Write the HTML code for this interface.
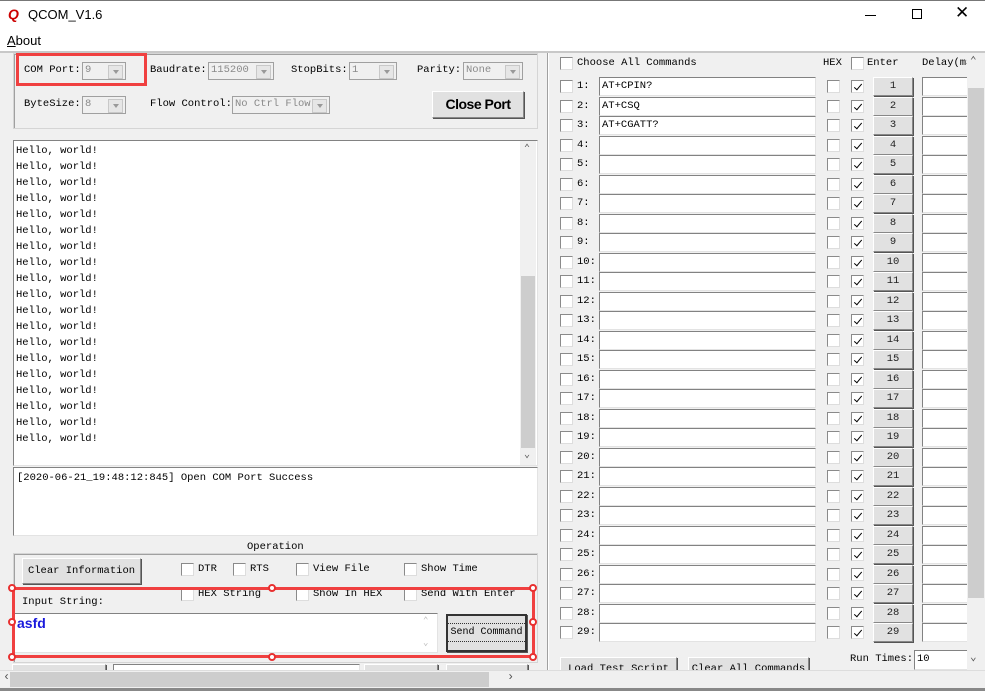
<!DOCTYPE html>
<html><head><meta charset="utf-8"><style>
*{margin:0;padding:0;box-sizing:border-box}
body{width:985px;height:691px;overflow:hidden;background:#f0f0f0;position:relative;font-family:"Liberation Mono","DejaVu Sans Mono",monospace;font-size:10.5px;color:#000}
.a{position:absolute}
.sans{font-family:"Liberation Sans",sans-serif}
.cb{position:absolute;width:13px;height:13px;background:#fff;border:1px solid #8a8a8a;border-right-color:#ddd;border-bottom-color:#ddd}
.cb.k::after{content:"";position:absolute;left:4px;top:1px;width:3px;height:7px;border:solid #000;border-width:0 1.5px 1.5px 0;transform:rotate(40deg)}
.in{position:absolute;background:#fff;border:1px solid #828282;border-right-color:#e3e3e3;border-bottom-color:#e3e3e3}
.btn{position:absolute;background:#e1e1e1;border:1px solid #fff;border-right-color:#888;border-bottom-color:#888;box-shadow:1px 1px 0 #555;text-align:center;font-weight:normal}
.r{position:absolute;left:0;height:18px;width:985px}
.r .c1{left:560px;top:3px}
.r .l{position:absolute;left:577px;top:3px}
.r .i{left:599px;top:0;width:217px;height:19px;padding-left:2px;line-height:17px}
.r .c2{left:827px;top:3px}
.r .c3{left:851px;top:3px}
.r .b{left:873px;top:0;width:40px;height:19px;line-height:17px;color:#222}
.r .d{left:922px;top:0;width:46px;height:19px}
.combo{position:absolute;background:#f0f0f0;border:1px solid #a0a0a0;color:#8a8a8a;padding-left:2px;line-height:15px;height:18px}
.combo::after{content:"";position:absolute;right:2px;top:2px;width:13px;height:12px;border:1px solid #c8c8c8;background:#e6e6e6}
.combo::before{content:"";position:absolute;right:6px;top:7px;border:3px solid transparent;border-top:4px solid #999;z-index:2}
.grp{position:absolute;border:1px solid #d5d5d5;box-shadow:inset 1px 1px 0 #a0a0a0}
.rd{position:absolute;width:8px;height:8px;border:2px solid #e83030;background:#fff;border-radius:50%}
</style></head><body>
<div class="a" style="left:0;top:0;width:985px;height:51px;background:#fff"></div>
<div class="a" style="left:0;top:0;width:985px;height:1px;background:#777"></div>
<div class="a sans" style="left:8px;top:6px;font-size:14px;font-weight:bold;font-style:italic;color:#c00">Q</div>
<div class="a sans" style="left:28px;top:7px;font-size:13px">QCOM_V1.6</div>
<div class="a" style="left:865px;top:15px;width:11px;height:1px;background:#000"></div>
<div class="a" style="left:912px;top:9px;width:10px;height:10px;border:1px solid #000"></div>
<div class="a sans" style="left:955px;top:3px;font-size:17px;font-weight:300">✕</div>
<div class="a sans" style="left:7px;top:33px;font-size:13px"><u>A</u>bout</div>
<div class="a" style="left:0;top:51px;width:985px;height:2px;background:#c8c8c8"></div>

<div class="grp" style="left:13px;top:53px;width:525px;height:76px"></div>
<div class="a" style="left:24px;top:64px">COM Port:</div>
<div class="combo" style="left:82px;top:62px;width:44px">9</div>
<div class="a" style="left:150px;top:64px">Baudrate:</div>
<div class="combo" style="left:208px;top:62px;width:66px">115200</div>
<div class="a" style="left:291px;top:64px">StopBits:</div>
<div class="combo" style="left:349px;top:62px;width:48px">1</div>
<div class="a" style="left:417px;top:64px">Parity:</div>
<div class="combo" style="left:463px;top:62px;width:60px">None</div>
<div class="a" style="left:24px;top:98px">ByteSize:</div>
<div class="combo" style="left:82px;top:96px;width:44px">8</div>
<div class="a" style="left:150px;top:98px">Flow Control:</div>
<div class="combo" style="left:232px;top:96px;width:98px">No Ctrl Flow</div>
<div class="btn sans" style="left:432px;top:91px;width:92px;height:27px;font-size:14px;font-weight:bold;line-height:25px;letter-spacing:-0.5px">Close Port</div>
<div class="a" style="left:16px;top:53px;width:131px;height:33px;border:3px solid #f04040"></div>

<div class="in" style="left:13px;top:140px;width:525px;height:326px"></div>
<div class="a" style="left:520px;top:141px;width:16px;height:324px;background:#f0f0f0"></div>
<div class="a" style="left:521px;top:276px;width:14px;height:172px;background:#cdcdcd"></div>
<div class="a" style="left:524px;top:143px;color:#555;font-size:10px">⌃</div>
<div class="a" style="left:524px;top:449px;color:#555;font-size:10px">⌄</div>
<div class="a" style="left:16px;top:143px;line-height:16px;white-space:pre">Hello, world!
Hello, world!
Hello, world!
Hello, world!
Hello, world!
Hello, world!
Hello, world!
Hello, world!
Hello, world!
Hello, world!
Hello, world!
Hello, world!
Hello, world!
Hello, world!
Hello, world!
Hello, world!
Hello, world!
Hello, world!
Hello, world!</div>
<div class="in" style="left:13px;top:467px;width:525px;height:69px"></div>
<div class="a" style="left:17px;top:472px">[2020-06-21_19:48:12:845] Open COM Port Success</div>

<div class="grp" style="left:13px;top:553px;width:525px;height:110px"></div>
<div class="a" style="left:245px;top:541px;background:#f0f0f0;padding:0 2px">Operation</div>
<div class="btn" style="left:22px;top:558px;width:119px;height:26px;line-height:24px">Clear Information</div>
<div class="cb" style="left:181px;top:563px"></div><div class="a" style="left:198px;top:563px">DTR</div>
<div class="cb" style="left:233px;top:563px"></div><div class="a" style="left:250px;top:563px">RTS</div>
<div class="cb" style="left:296px;top:563px"></div><div class="a" style="left:313px;top:563px">View File</div>
<div class="cb" style="left:404px;top:563px"></div><div class="a" style="left:421px;top:563px">Show Time</div>
<div class="cb" style="left:181px;top:588px"></div><div class="a" style="left:198px;top:588px">HEX String</div>
<div class="cb" style="left:296px;top:588px"></div><div class="a" style="left:313px;top:588px">Show In HEX</div>
<div class="cb" style="left:404px;top:588px"></div><div class="a" style="left:421px;top:588px">Send With Enter</div>
<div class="a" style="left:22px;top:596px">Input String:</div>
<div class="in" style="left:12px;top:613px;width:426px;height:40px"></div>
<div class="a sans" style="left:17px;top:615px;color:#1a1adc;font-size:14px;font-weight:bold">asfd</div>
<div class="a" style="left:423px;top:616px;color:#bbb;font-size:9px">⌃</div>
<div class="a" style="left:423px;top:638px;color:#bbb;font-size:9px">⌄</div>
<div class="btn" style="left:446px;top:614px;width:81px;height:38px;line-height:34px;border:2px solid #333;font-size:10px"><span style="outline:1px dotted #333;outline-offset:3px">Send Command</span></div>
<div class="a" style="left:12px;top:587px;width:523px;height:71px;border:3px solid #f04040"></div>
<div class="rd" style="left:8px;top:584px"></div><div class="rd" style="left:268px;top:584px"></div><div class="rd" style="left:529px;top:584px"></div>
<div class="rd" style="left:8px;top:618px"></div><div class="rd" style="left:529px;top:618px"></div>
<div class="rd" style="left:8px;top:653px"></div><div class="rd" style="left:268px;top:653px"></div><div class="rd" style="left:529px;top:653px"></div>
<div class="btn" style="left:12px;top:664px;width:94px;height:20px"></div>
<div class="in" style="left:113px;top:664px;width:247px;height:20px"></div>
<div class="btn" style="left:364px;top:664px;width:74px;height:20px"></div>
<div class="btn" style="left:446px;top:664px;width:82px;height:20px"></div>

<div class="a" style="left:547px;top:53px;width:1px;height:617px;background:#a0a0a0"></div>
<div class="a" style="left:548px;top:53px;width:1px;height:617px;background:#fff"></div>

<div class="cb" style="left:560px;top:57px"></div><div class="a" style="left:577px;top:57px">Choose All Commands</div>
<div class="a" style="left:823px;top:57px">HEX</div>
<div class="cb" style="left:851px;top:57px"></div><div class="a" style="left:867px;top:57px">Enter</div>
<div class="a" style="left:922px;top:57px;width:46px;overflow:hidden;white-space:nowrap">Delay(mS)</div>

<div class="r" style="top:77px"><div class="cb c1"></div><span class="l">1:</span><div class="in i">AT+CPIN?</div><div class="cb c2"></div><div class="cb c3 k"></div><div class="btn b">1</div><div class="in d"></div></div>
<div class="r" style="top:96.5px"><div class="cb c1"></div><span class="l">2:</span><div class="in i">AT+CSQ</div><div class="cb c2"></div><div class="cb c3 k"></div><div class="btn b">2</div><div class="in d"></div></div>
<div class="r" style="top:116px"><div class="cb c1"></div><span class="l">3:</span><div class="in i">AT+CGATT?</div><div class="cb c2"></div><div class="cb c3 k"></div><div class="btn b">3</div><div class="in d"></div></div>
<div class="r" style="top:135.5px"><div class="cb c1"></div><span class="l">4:</span><div class="in i"></div><div class="cb c2"></div><div class="cb c3 k"></div><div class="btn b">4</div><div class="in d"></div></div>
<div class="r" style="top:155px"><div class="cb c1"></div><span class="l">5:</span><div class="in i"></div><div class="cb c2"></div><div class="cb c3 k"></div><div class="btn b">5</div><div class="in d"></div></div>
<div class="r" style="top:174.5px"><div class="cb c1"></div><span class="l">6:</span><div class="in i"></div><div class="cb c2"></div><div class="cb c3 k"></div><div class="btn b">6</div><div class="in d"></div></div>
<div class="r" style="top:194px"><div class="cb c1"></div><span class="l">7:</span><div class="in i"></div><div class="cb c2"></div><div class="cb c3 k"></div><div class="btn b">7</div><div class="in d"></div></div>
<div class="r" style="top:213.5px"><div class="cb c1"></div><span class="l">8:</span><div class="in i"></div><div class="cb c2"></div><div class="cb c3 k"></div><div class="btn b">8</div><div class="in d"></div></div>
<div class="r" style="top:233px"><div class="cb c1"></div><span class="l">9:</span><div class="in i"></div><div class="cb c2"></div><div class="cb c3 k"></div><div class="btn b">9</div><div class="in d"></div></div>
<div class="r" style="top:252.5px"><div class="cb c1"></div><span class="l">10:</span><div class="in i"></div><div class="cb c2"></div><div class="cb c3 k"></div><div class="btn b">10</div><div class="in d"></div></div>
<div class="r" style="top:272px"><div class="cb c1"></div><span class="l">11:</span><div class="in i"></div><div class="cb c2"></div><div class="cb c3 k"></div><div class="btn b">11</div><div class="in d"></div></div>
<div class="r" style="top:291.5px"><div class="cb c1"></div><span class="l">12:</span><div class="in i"></div><div class="cb c2"></div><div class="cb c3 k"></div><div class="btn b">12</div><div class="in d"></div></div>
<div class="r" style="top:311px"><div class="cb c1"></div><span class="l">13:</span><div class="in i"></div><div class="cb c2"></div><div class="cb c3 k"></div><div class="btn b">13</div><div class="in d"></div></div>
<div class="r" style="top:330.5px"><div class="cb c1"></div><span class="l">14:</span><div class="in i"></div><div class="cb c2"></div><div class="cb c3 k"></div><div class="btn b">14</div><div class="in d"></div></div>
<div class="r" style="top:350px"><div class="cb c1"></div><span class="l">15:</span><div class="in i"></div><div class="cb c2"></div><div class="cb c3 k"></div><div class="btn b">15</div><div class="in d"></div></div>
<div class="r" style="top:369.5px"><div class="cb c1"></div><span class="l">16:</span><div class="in i"></div><div class="cb c2"></div><div class="cb c3 k"></div><div class="btn b">16</div><div class="in d"></div></div>
<div class="r" style="top:389px"><div class="cb c1"></div><span class="l">17:</span><div class="in i"></div><div class="cb c2"></div><div class="cb c3 k"></div><div class="btn b">17</div><div class="in d"></div></div>
<div class="r" style="top:408.5px"><div class="cb c1"></div><span class="l">18:</span><div class="in i"></div><div class="cb c2"></div><div class="cb c3 k"></div><div class="btn b">18</div><div class="in d"></div></div>
<div class="r" style="top:428px"><div class="cb c1"></div><span class="l">19:</span><div class="in i"></div><div class="cb c2"></div><div class="cb c3 k"></div><div class="btn b">19</div><div class="in d"></div></div>
<div class="r" style="top:447.5px"><div class="cb c1"></div><span class="l">20:</span><div class="in i"></div><div class="cb c2"></div><div class="cb c3 k"></div><div class="btn b">20</div><div class="in d"></div></div>
<div class="r" style="top:467px"><div class="cb c1"></div><span class="l">21:</span><div class="in i"></div><div class="cb c2"></div><div class="cb c3 k"></div><div class="btn b">21</div><div class="in d"></div></div>
<div class="r" style="top:486.5px"><div class="cb c1"></div><span class="l">22:</span><div class="in i"></div><div class="cb c2"></div><div class="cb c3 k"></div><div class="btn b">22</div><div class="in d"></div></div>
<div class="r" style="top:506px"><div class="cb c1"></div><span class="l">23:</span><div class="in i"></div><div class="cb c2"></div><div class="cb c3 k"></div><div class="btn b">23</div><div class="in d"></div></div>
<div class="r" style="top:525.5px"><div class="cb c1"></div><span class="l">24:</span><div class="in i"></div><div class="cb c2"></div><div class="cb c3 k"></div><div class="btn b">24</div><div class="in d"></div></div>
<div class="r" style="top:545px"><div class="cb c1"></div><span class="l">25:</span><div class="in i"></div><div class="cb c2"></div><div class="cb c3 k"></div><div class="btn b">25</div><div class="in d"></div></div>
<div class="r" style="top:564.5px"><div class="cb c1"></div><span class="l">26:</span><div class="in i"></div><div class="cb c2"></div><div class="cb c3 k"></div><div class="btn b">26</div><div class="in d"></div></div>
<div class="r" style="top:584px"><div class="cb c1"></div><span class="l">27:</span><div class="in i"></div><div class="cb c2"></div><div class="cb c3 k"></div><div class="btn b">27</div><div class="in d"></div></div>
<div class="r" style="top:603.5px"><div class="cb c1"></div><span class="l">28:</span><div class="in i"></div><div class="cb c2"></div><div class="cb c3 k"></div><div class="btn b">28</div><div class="in d"></div></div>
<div class="r" style="top:623px"><div class="cb c1"></div><span class="l">29:</span><div class="in i"></div><div class="cb c2"></div><div class="cb c3 k"></div><div class="btn b">29</div><div class="in d"></div></div>

<div class="btn" style="left:560px;top:657px;width:117px;height:24px;padding-top:5px">Load Test Script</div>
<div class="btn" style="left:688px;top:657px;width:121px;height:24px;padding-top:5px">Clear All Commands</div>
<div class="a" style="left:850px;top:653px">Run Times:</div>
<div class="in" style="left:914px;top:650px;width:54px;height:20px;padding:2px">10</div>

<div class="a" style="left:967px;top:53px;width:18px;height:617px;background:#f0f0f0"></div>
<div class="a" style="left:968px;top:88px;width:16px;height:510px;background:#cdcdcd"></div>
<div class="a" style="left:970px;top:54px;color:#555;font-size:11px">⌃</div>
<div class="a" style="left:970px;top:650px;color:#555;font-size:11px">⌄</div>

<div class="a" style="left:0;top:670px;width:985px;height:18px;background:#f0f0f0;border-top:1px solid #ddd"></div>
<div class="a" style="left:10px;top:672px;width:479px;height:15px;background:#cdcdcd"></div>
<div class="a" style="left:3px;top:670px;color:#555;font-size:12px">‹</div>
<div class="a" style="left:507px;top:670px;color:#555;font-size:12px">›</div>
<div class="a" style="left:0;top:688px;width:985px;height:3px;background:#888"></div>
</body></html>
